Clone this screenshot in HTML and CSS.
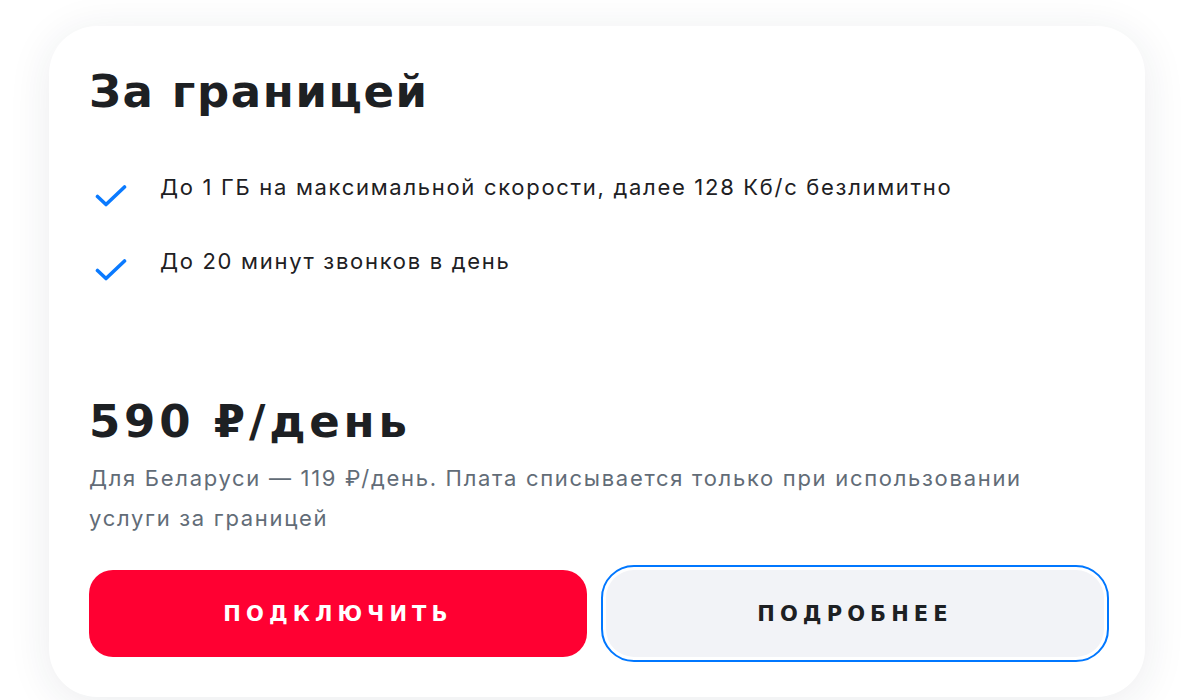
FILE: index.html
```html
<!DOCTYPE html>
<html lang="ru">
<head>
<meta charset="utf-8">
<title>За границей</title>
<link rel="stylesheet" href="styles.css">
</head>
<body>
<div class="card">
  <h2 class="title">За границей</h2>
  <ul class="features">
    <li class="feature">
      <svg class="check" width="32" height="24" viewBox="0 0 32 24" aria-hidden="true"><path d="M2.5 12.5 L11 20.5 L29.5 3" fill="none" stroke="#0a7aff" stroke-width="3.6" stroke-linecap="round" stroke-linejoin="round"/></svg>
      <span>До 1 ГБ на максимальной скорости, далее 128 Кб/с безлимитно</span>
    </li>
    <li class="feature">
      <svg class="check" width="32" height="24" viewBox="0 0 32 24" aria-hidden="true"><path d="M2.5 12.5 L11 20.5 L29.5 3" fill="none" stroke="#0a7aff" stroke-width="3.6" stroke-linecap="round" stroke-linejoin="round"/></svg>
      <span>До 20 минут звонков в день</span>
    </li>
  </ul>
  <div class="bottom">
    <div class="price">590 ₽/день</div>
    <p class="note">Для Беларуси — 119 ₽/день. Плата списывается только при использовании услуги за границей</p>
    <div class="actions">
      <button class="btn btn-primary">ПОДКЛЮЧИТЬ</button>
      <button class="btn btn-secondary">ПОДРОБНЕЕ</button>
    </div>
  </div>
</div>
</body>
</html>
```
FILE: styles.css
```css
html, body {
  margin: 0;
  padding: 0;
  background: #ffffff;
}
body {
  width: 1190px;
  height: 700px;
  overflow: hidden;
  font-family: Inter, Roboto, "Noto Sans", sans-serif;
  color: #1d2023;
}
.card {
  box-sizing: border-box;
  margin: 26px 0 0 49px;
  width: 1096px;
  height: 671px;
  padding: 40px 41px 40px 40px;
  background: #ffffff;
  border-radius: 48px;
  box-shadow: 0 6px 44px rgba(30, 40, 70, 0.09);
  display: flex;
  flex-direction: column;
}
.title {
  margin: 0;
  font-family: "DejaVu Sans", sans-serif;
  font-weight: 700;
  font-size: 45px;
  line-height: 52px;
  letter-spacing: 1.6px;
  color: #1d2023;
}
.features {
  list-style: none;
  margin: 54px 0 0 0;
  padding: 0;
  display: flex;
  flex-direction: column;
  gap: 38px;
}
.feature {
  display: flex;
  align-items: flex-start;
  gap: 33px;
  font-size: 22px;
  line-height: 30px;
  letter-spacing: 1.7px;
}
.check {
  flex: none;
  margin: 12px 0 0 6px;
}
.bottom {
  margin-top: auto;
}
.price {
  font-family: "DejaVu Sans", sans-serif;
  font-weight: 700;
  font-size: 45px;
  line-height: 52px;
  letter-spacing: 3.8px;
  color: #1d2023;
}
.note {
  margin: 10px 0 0 0;
  font-size: 22px;
  line-height: 40px;
  letter-spacing: 1.7px;
  color: #626c77;
  max-width: 970px;
}
.actions {
  margin-top: 32px;
  display: grid;
  grid-template-columns: 1fr 1fr;
  gap: 19px;
}
.btn {
  height: 87px;
  border: none;
  border-radius: 24px;
  font-family: "DejaVu Sans", sans-serif;
  font-weight: 700;
  font-size: 21px;
  letter-spacing: 5.1px;
  cursor: pointer;
}
.btn-primary {
  background: #ff0032;
  color: #ffffff;
}
.btn-secondary {
  background: #f2f3f7;
  color: #1d2023;
  outline: 2px solid #0077ff;
  outline-offset: 3px;
  border-radius: 28px;
}
```
